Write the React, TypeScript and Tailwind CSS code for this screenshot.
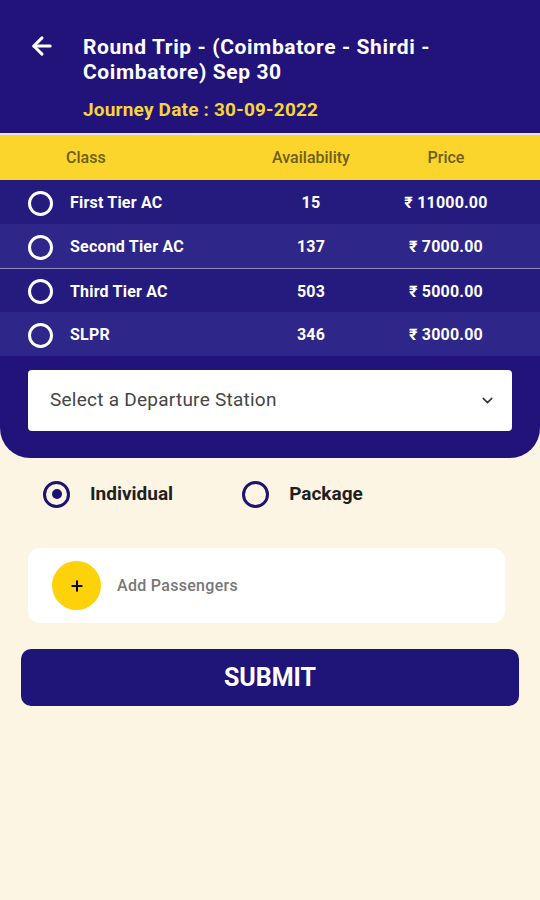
import { ArrowLeft, ChevronDown, Plus } from 'lucide-react';

const rows = [
  { name: 'First Tier AC', seats: '15', price: '₹ 11000.00' },
  { name: 'Second Tier AC', seats: '137', price: '₹ 7000.00' },
  { name: 'Third Tier AC', seats: '503', price: '₹ 5000.00' },
  { name: 'SLPR', seats: '346', price: '₹ 3000.00' },
];

const App = () => {
  return (
    <main className="w-[540px] min-h-[900px] bg-[#fdf5e4] font-['Roboto',sans-serif]">
      {/* Header + class table */}
      <section className="bg-[#21137a] rounded-b-[30px] pb-[27px]">
        <div className="flex pt-[35px] pl-[28px] pr-6">
          <ArrowLeft className="w-[28px] h-[28px] text-white -mt-[3px] shrink-0" strokeWidth={2.6} />
          <div className="ml-[27px] max-w-[370px]">
            <h1 className="text-white font-bold text-[21px] leading-[25px] tracking-[0.6px]">
              Round Trip - (Coimbatore - Shirdi - Coimbatore) Sep 30
            </h1>
            <p className="mt-[14px] text-[#f7d53a] font-bold text-[19px] leading-[22px] tracking-[0.2px]">
              Journey Date : 30-09-2022
            </p>
          </div>
        </div>

        <div className="mt-[12px] border-t-2 border-[#e8e6f4]">
          <div className="flex items-center h-[45px] bg-[#fbd52c] text-[#6e5e18] text-[16px] font-medium">
            <span className="w-[250px] pl-[66px]">Class</span>
            <span className="w-[122px] text-center">Availability</span>
            <span className="w-[148px] text-center">Price</span>
          </div>
          {rows.map((r, i) => (
            <div
              key={r.name}
              className={
                'flex items-center h-[44px] pt-[2px] text-white font-bold text-[16px] tracking-[0.2px] ' +
                (i % 2 === 0 ? 'bg-[#251b7e]' : 'bg-[#2e2689]') +
                (i === 2 ? ' border-t border-[#8f8abd]' : '')
              }
            >
              <div className="w-[250px] flex items-center pl-[28px]">
                <span className="w-[25px] h-[25px] rounded-full border-[3px] border-white" />
                <span className="ml-[17px]">{r.name}</span>
              </div>
              <span className="w-[122px] text-center">{r.seats}</span>
              <span className="w-[148px] text-center">{r.price}</span>
            </div>
          ))}
        </div>

        <div className="mx-[28px] mt-[14px] h-[61px] bg-white rounded-[4px] flex items-center justify-between pl-[22px] pr-[16px]">
          <span className="text-[19px] tracking-[0.25px] text-[#454545]">Select a Departure Station</span>
          <ChevronDown className="w-[17px] h-[17px] text-[#333]" strokeWidth={2.2} />
        </div>
      </section>

      {/* Booking type */}
      <div className="flex items-center mt-[22px] pl-[43px] h-[28px]">
        <div className="flex items-center">
          <span className="w-[27px] h-[27px] rounded-full border-[3px] border-[#1c1470] flex items-center justify-center">
            <span className="w-[10px] h-[10px] rounded-full bg-[#1c1470]" />
          </span>
          <span className="ml-[20px] text-[19px] font-bold text-[#1f1f1f]">Individual</span>
        </div>
        <div className="flex items-center ml-[69px]">
          <span className="w-[27px] h-[27px] rounded-full border-[3px] border-[#1c1470]" />
          <span className="ml-[20px] text-[19px] font-bold text-[#1f1f1f]">Package</span>
        </div>
      </div>

      {/* Passengers */}
      <div className="ml-[28px] mr-[35px] mt-[40px] h-[75px] bg-white rounded-[12px] flex items-center pl-[24px]">
        <span className="w-[49px] h-[49px] rounded-full bg-[#fed20a] flex items-center justify-center">
          <Plus className="w-[16px] h-[16px] text-black" strokeWidth={3} />
        </span>
        <span className="ml-[16px] text-[16px] tracking-[0.3px] font-medium text-[#777]">Add Passengers</span>
      </div>

      <button className="block mx-[21px] mt-[26px] w-[498px] h-[57px] bg-[#1f1478] rounded-[10px] text-white text-[25px] font-bold">
        SUBMIT
      </button>
    </main>
  );
};

export default App;
